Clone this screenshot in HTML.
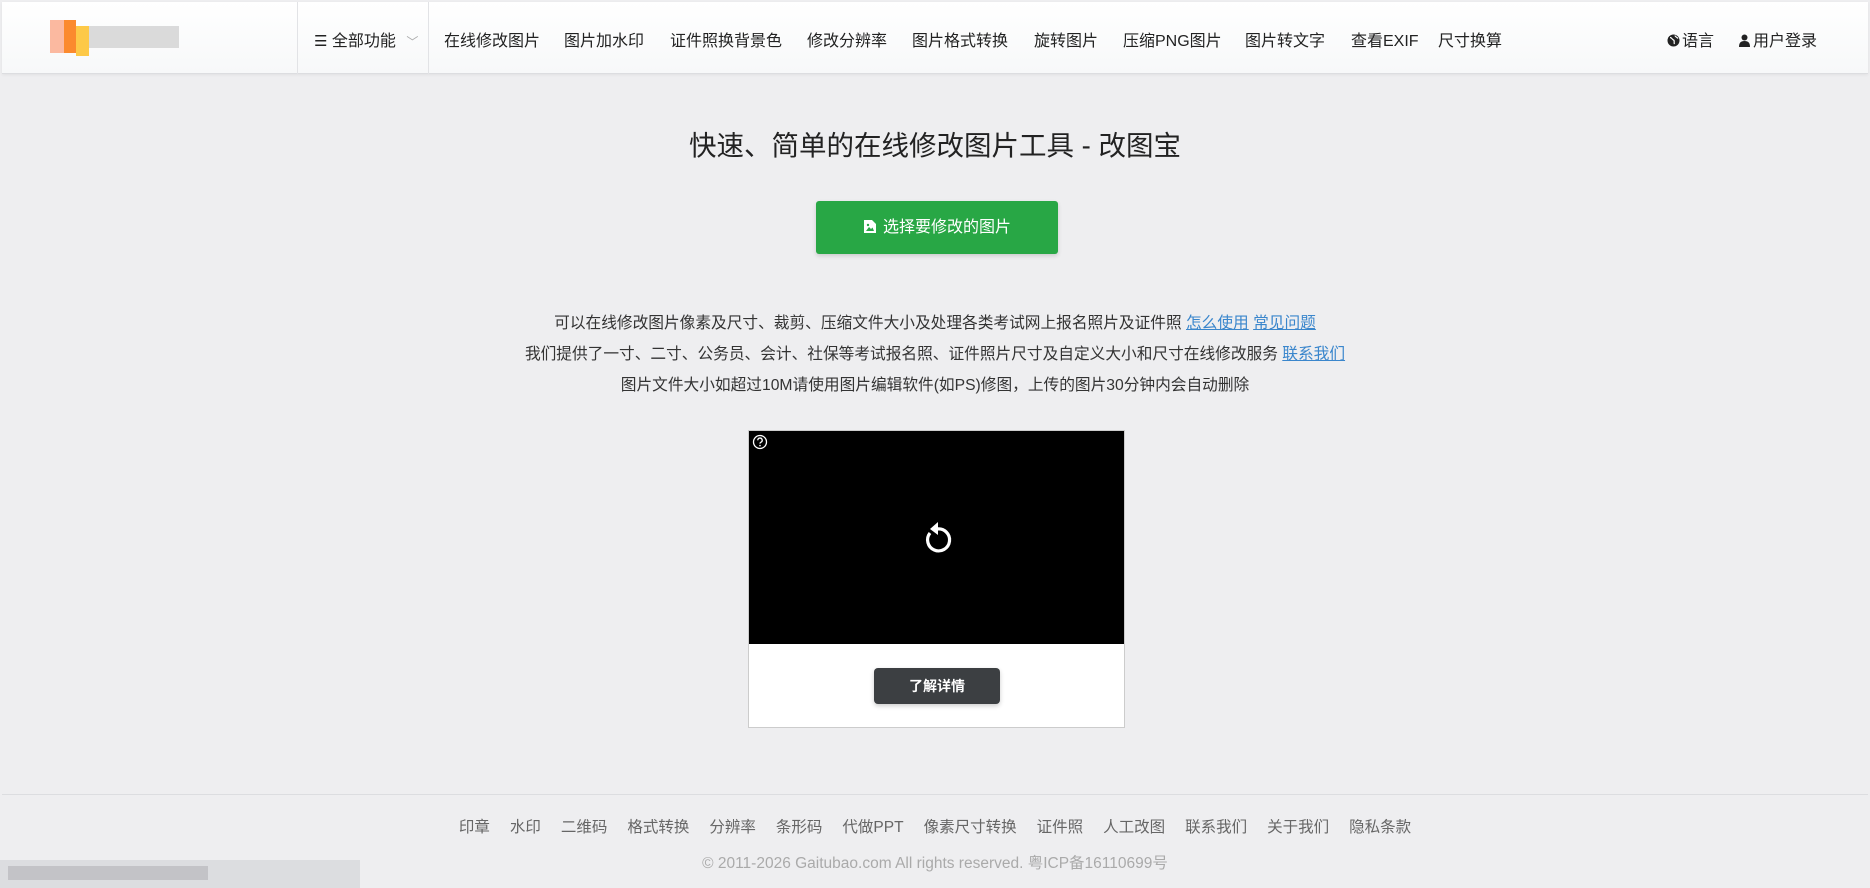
<!DOCTYPE html>
<html><head><meta charset="utf-8"><style>
*{margin:0;padding:0;box-sizing:border-box}
body{width:1870px;height:888px;background:#eeeef0;font-family:"Liberation Sans","Noto Sans CJK SC",sans-serif;color:#222;position:relative;overflow:hidden}
.hdr{position:absolute;left:2px;top:2px;width:1866px;height:72px;background:linear-gradient(#fff,#f7f8f9);border-bottom:1px solid #dcdde0;box-shadow:0 1px 3px rgba(0,0,0,.06)}
.abs{position:absolute;white-space:nowrap}
.nav{font-size:16px;top:25px;color:#222}
.div{position:absolute;top:0;width:1px;height:72px;background:#e2e3e6}
.logo div{position:absolute}
.t{font-size:27.5px;color:#222;top:123px;left:0;width:1870px;text-align:center}
.btn{left:816px;top:201px;width:242px;height:53px;background:#28a745;border-radius:3px;color:#fff;font-size:16px;text-align:center;line-height:53px;box-shadow:0 2px 4px rgba(0,0,0,.15)}
.p{left:0;width:1870px;text-align:center;font-size:15.7px;color:#333}
.p a{color:#3a86cc;text-decoration:underline}
.cap{left:748px;top:430px;width:377px;height:298px;background:#fff;border:1px solid #ccc}
.blk{position:absolute;left:0;top:0;width:375px;height:213px;background:#000}
.db{position:absolute;left:125px;top:237px;width:126px;height:36px;background:#3c3f42;border-radius:4px;color:#fff;font-size:14px;font-weight:bold;text-align:center;line-height:36px;box-shadow:0 2px 5px rgba(0,0,0,.2)}
.ft{left:0;width:1870px;text-align:center;font-size:15.5px;color:#666}
.ft span{margin:0 10px}
</style></head><body>
<div class="hdr">
 <div class="logo">
  <div style="left:48px;top:18px;width:14px;height:33px;background:#fbb9a0"></div>
  <div style="left:62px;top:18px;width:12px;height:33px;background:#fb8a2e"></div>
  <div style="left:74px;top:24px;width:13px;height:30px;background:#fdc948"></div>
  <div style="left:87px;top:24px;width:90px;height:22px;background:#ccc;opacity:.7"></div>
 </div>
 <div class="div" style="left:295px"></div>
 <div class="div" style="left:426px"></div>
 <div class="abs nav" style="left:312px"><span style="font-size:15px">☰</span> 全部功能 <span style="color:#aaa;font-size:12px;margin-left:6px">﹀</span></div>
 <div class="abs nav" style="left:442px">在线修改图片</div>
 <div class="abs nav" style="left:562px">图片加水印</div>
 <div class="abs nav" style="left:668px">证件照换背景色</div>
 <div class="abs nav" style="left:805px">修改分辨率</div>
 <div class="abs nav" style="left:910px">图片格式转换</div>
 <div class="abs nav" style="left:1032px">旋转图片</div>
 <div class="abs nav" style="left:1121px">压缩PNG图片</div>
 <div class="abs nav" style="left:1243px">图片转文字</div>
 <div class="abs nav" style="left:1349px">查看EXIF</div>
 <div class="abs nav" style="left:1436px">尺寸换算</div>
 <div class="abs nav" style="left:1665px"><svg width="13" height="13" viewBox="0 0 13 13" style="vertical-align:-1px;margin-right:2px"><circle cx="6.5" cy="6.5" r="6" fill="#222"/><path d="M3 3.5c2 0 2 2 3.5 2.5s0 2.5 1 4M8 1.5c0 1.5 2 1.5 3 3" stroke="#fff" stroke-width="1.2" fill="none"/></svg>语言</div>
 <div class="abs nav" style="left:1737px"><svg width="11" height="13" viewBox="0 0 11 13" style="vertical-align:-1px;margin-right:3px"><circle cx="5.5" cy="3.5" r="3" fill="#222"/><path d="M0 13c0-4 1.5-6 5.5-6s5.5 2 5.5 6z" fill="#222"/></svg>用户登录</div>
</div>
<div class="abs t">快速、简单的在线修改图片工具 - 改图宝</div>
<div class="abs btn"><svg width="14" height="15" viewBox="0 0 14 15" style="vertical-align:-2px;margin-right:6px"><path d="M1 1h8l4 4v9H1z" fill="#fff"/><path d="M3 12l3-4 2 2 1.5-1.5L11 12z" fill="#28a745"/><circle cx="5" cy="6" r="1.2" fill="#28a745"/></svg>选择要修改的图片</div>
<div class="abs p" style="top:310px">可以在线修改图片像素及尺寸、裁剪、压缩文件大小及处理各类考试网上报名照片及证件照 <a>怎么使用</a> <a>常见问题</a></div>
<div class="abs p" style="top:341px">我们提供了一寸、二寸、公务员、会计、社保等考试报名照、证件照片尺寸及自定义大小和尺寸在线修改服务 <a>联系我们</a></div>
<div class="abs p" style="top:372px">图片文件大小如超过10M请使用图片编辑软件(如PS)修图，上传的图片30分钟内会自动删除</div>
<div class="abs cap">
 <div class="blk">
  <svg width="16" height="16" viewBox="0 0 16 16" style="position:absolute;left:3px;top:3px"><circle cx="8" cy="8" r="6.5" fill="none" stroke="#fff" stroke-width="1.3"/><path d="M5.8 6.3a2.2 2.2 0 1 1 3 2c-.6.3-.8.7-.8 1.3" fill="none" stroke="#fff" stroke-width="1.3"/><circle cx="8" cy="11.6" r=".8" fill="#fff"/></svg>
  <svg width="32" height="34" viewBox="0 0 32 34" style="position:absolute;left:172px;top:90px"><path d="M9 12a11 11 0 1 0 7-4" fill="none" stroke="#fff" stroke-width="3.2"/><path d="M17 1L9 8l8 6z" fill="#fff"/></svg>
 </div>
 <div class="db">了解详情</div>
</div>
<div class="abs" style="left:2px;top:794px;width:1866px;height:1px;background:#dcdde0"></div>
<div class="abs ft" style="top:815px"><span>印章</span><span>水印</span><span>二维码</span><span>格式转换</span><span>分辨率</span><span>条形码</span><span>代做PPT</span><span>像素尺寸转换</span><span>证件照</span><span>人工改图</span><span>联系我们</span><span>关于我们</span><span>隐私条款</span></div>
<div class="abs ft" style="top:851px;color:#aaa">© 2011-2026 Gaitubao.com All rights reserved. 粤ICP备16110699号</div>
<div class="abs" style="left:0;top:860px;width:360px;height:28px;background:#dcdde0"></div>
<div class="abs" style="left:8px;top:866px;width:200px;height:14px;background:#b8b8bc;opacity:.7"></div>
</body></html>
